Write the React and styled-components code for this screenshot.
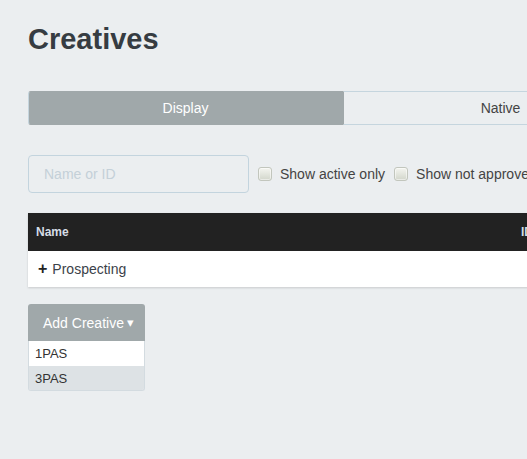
import React from "react";
import styled, { createGlobalStyle } from "styled-components";

const Global = createGlobalStyle`
  html, body { margin: 0; padding: 0; background: #ebeef0; overflow: hidden; }
  body { font-family: "Liberation Sans", Arial, sans-serif; color: #333; }
  * { box-sizing: border-box; }
`;

const Page = styled.div`
  width: 630px;
  margin-left: 28px;
  padding-top: 20px;
  min-height: 459px;
`;

const Title = styled.h1`
  margin: 0;
  font-size: 29px;
  font-weight: bold;
  color: #363c42;
  line-height: 38px;
`;

const Tabs = styled.div`
  display: flex;
  margin-top: 33px;
  height: 34px;
`;

const Tab = styled.div`
  flex: 1;
  display: flex;
  align-items: center;
  justify-content: center;
  font-size: 14px;
  color: ${(p) => (p.$active ? "#fff" : "#444")};
  background: ${(p) => (p.$active ? "#a0a8aa" : "transparent")};
  border: 1px solid ${(p) => (p.$active ? "#a0a8aa" : "#c5d5de")};
  border-left-color: ${(p) => (p.$active ? "#c5d5de" : "#a0a8aa")};
  border-radius: ${(p) => (p.$first ? "3px 0 0 3px" : "0 3px 3px 0")};
`;

const Filters = styled.div`
  display: flex;
  align-items: center;
  margin-top: 30px;
  gap: 9px;
`;

const Search = styled.input`
  width: 221px;
  height: 38px;
  border: 1px solid #c3d4de;
  border-radius: 4px;
  background: #ebeef0;
  padding: 0 15px;
  font-family: inherit;
  font-size: 14px;
  outline: none;
  &::placeholder { color: #c4d0d8; }
`;

const Check = styled.label`
  display: flex;
  align-items: center;
  gap: 8px;
  font-size: 14px;
  color: #444;
  white-space: nowrap;
`;

const Box = styled.span`
  width: 14px;
  height: 14px;
  border-radius: 3px;
  border: 1px solid #c2c6bd;
  background: linear-gradient(#f4f5f0, #d2d6cb);
  box-shadow: inset 0 0 0 1px rgba(255,255,255,0.5);
`;

const Table = styled.div`
  margin-top: 20px;
  box-shadow: 0 1px 2px rgba(0,0,0,0.15);
`;

const Head = styled.div`
  display: flex;
  align-items: center;
  height: 38px;
  background: #222222;
  padding: 0 8px;
  font-size: 12px;
  font-weight: bold;
  color: #d6dde6;
`;

const HeadCell = styled.div`
  width: ${(p) => p.$w || "auto"};
  flex: ${(p) => (p.$w ? "none" : 1)};
`;

const Row = styled.div`
  display: flex;
  align-items: center;
  height: 36px;
  background: #fff;
  padding: 0 10px;
  font-size: 14px;
  color: #3b4249;
`;

const Plus = styled.span`
  font-weight: bold;
  font-size: 16px;
  margin-right: 5px;
  color: #222;
`;

const Dropdown = styled.div`
  margin-top: 17px;
  width: 117px;
`;

const AddButton = styled.div`
  height: 37px;
  background: #a0a8aa;
  color: #fff;
  font-size: 14px;
  display: flex;
  align-items: center;
  padding-left: 15px;
  border-radius: 3px 3px 0 0;
`;

const Caret = styled.span`
  font-size: 13px;
  margin-left: 3px;
`;

const Menu = styled.div`
  border: 1px solid #d3dbe0;
  border-top: none;
  border-radius: 0 0 3px 3px;
  overflow: hidden;
`;

const Item = styled.div`
  height: ${(p) => (p.$alt ? "24px" : "25px")};
  display: flex;
  align-items: center;
  padding-left: 6px;
  font-size: 13px;
  color: #333;
  background: ${(p) => (p.$alt ? "#dde2e5" : "#fff")};
`;

export default function App() {
  return (
    <>
      <Global />
      <Page>
        <Title>Creatives</Title>
        <Tabs>
          <Tab $active $first>Display</Tab>
          <Tab>Native</Tab>
        </Tabs>
        <Filters>
          <Search placeholder="Name or ID" />
          <Check><Box />Show active only</Check>
          <Check><Box />Show not approved</Check>
        </Filters>
        <Table>
          <Head>
            <HeadCell>Name</HeadCell>
            <HeadCell $w="129px">ID</HeadCell>
          </Head>
          <Row><Plus>+</Plus>Prospecting</Row>
        </Table>
        <Dropdown>
          <AddButton>Add Creative<Caret>▾</Caret></AddButton>
          <Menu>
            <Item>1PAS</Item>
            <Item $alt>3PAS</Item>
          </Menu>
        </Dropdown>
      </Page>
    </>
  );
}
